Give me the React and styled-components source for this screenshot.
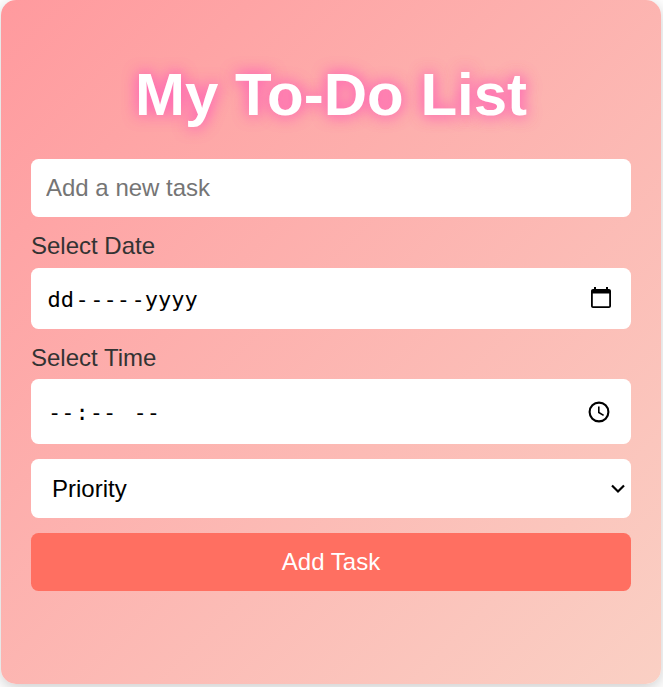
import React from 'react';
import styled, { createGlobalStyle } from 'styled-components';

const GlobalStyle = createGlobalStyle`
  *, *::before, *::after { box-sizing: border-box; }
  body {
    margin: 0;
    background: #fff;
    overflow: hidden;
    font-family: "Liberation Sans", Arial, sans-serif;
  }
`;

const Page = styled.main`
  height: 687px;
  padding: 0 2px 3px 1px;
`;

const Card = styled.section`
  width: 660px;
  height: 684px;
  padding: 60px 30px 0;
  border-radius: 15px;
  background: linear-gradient(135deg, #ff9a9e, #fad0c4);
  box-shadow: 0 4px 15px rgba(0, 0, 0, 0.2);
`;

const Title = styled.h1`
  margin: 0 0 30px;
  font-size: 60px;
  line-height: 69px;
  font-weight: 700;
  text-align: center;
  color: #fff;
  text-shadow: 0 0 15px #ff69b4, 0 0 15px rgba(255, 105, 180, 0.9);
`;

const Form = styled.form`
  display: flex;
  flex-direction: column;
`;

const TaskInput = styled.input`
  width: 100%;
  height: 58px;
  padding: 0 15px;
  border: 0;
  border-radius: 7.5px;
  background: #fff;
  font: 24px "Liberation Sans", Arial, sans-serif;
  &::placeholder { color: #757575; opacity: 1; }
`;

const Label = styled.label`
  height: ${(p) => p.$height}px;
  padding-top: 15px;
  font-size: 24px;
  line-height: 28px;
  color: #333;
`;

const Field = styled.div`
  display: flex;
  align-items: center;
  justify-content: space-between;
  height: ${(p) => p.$height}px;
  margin-bottom: ${(p) => p.$after || 0}px;
  padding: 0 ${(p) => p.$right}px 0 ${(p) => p.$left}px;
  border-radius: 7.5px;
  background: #fff;
  color: #000;
  font-size: 24px;
  line-height: 28px;
`;

const Parts = styled.div`
  display: flex;
  padding-top: ${(p) => p.$drop}px;
  font: 22px/28px "DejaVu Sans Mono", monospace;
  white-space: pre;
`;

const Part = styled.span`
  margin-right: ${(p) => p.$gap || 0}px;
`;

const Icon = styled.svg`
  display: block;
  flex: none;
  margin-bottom: ${(p) => p.$lift || 0}px;
`;

const AddButton = styled.button`
  height: 58px;
  padding: 0;
  border: 0;
  border-radius: 7.5px;
  background: #ff6f61;
  color: #fff;
  font: 24px "Liberation Sans", Arial, sans-serif;
`;

const CalendarIcon = () => (
  <Icon width="24" height="24" viewBox="0 0 24 24" $lift={2}>
    <path d="M20 3h-1V1h-2v2H7V1H5v2H4c-1.1 0-2 .9-2 2v15c0 1.1.9 2 2 2h16c1.1 0 2-.9 2-2V5c0-1.1-.9-2-2-2zm.2 17.3H3.8V7.5h16.4z" />
  </Icon>
);

const ClockIcon = () => (
  <Icon width="22" height="22" viewBox="0 0 22 22" fill="none" stroke="#000">
    <circle cx="11" cy="11" r="9.4" strokeWidth="2.1" />
    <path d="M10.8 5.5v6l4.8 2.9" strokeWidth="1.6" />
  </Icon>
);

const ChevronIcon = () => (
  <Icon width="14" height="10" viewBox="0 0 14 10" fill="none" stroke="#000">
    <path d="M1 1.5l6 6 6-6" strokeWidth="2.2" />
  </Icon>
);

export default function App() {
  return (
    <>
      <GlobalStyle />
      <Page>
        <Card>
          <Title>My To-Do List</Title>
          <Form>
            <TaskInput placeholder="Add a new task" />
            <Label $height={51}>Select Date</Label>
            <Field $height={61} $left={16.5} $right={18}>
              <Parts $drop={2}>
                <Part $gap={1.5}>dd</Part>
                <Part $gap={1.5}>-</Part>
                <Part $gap={1.5}>---</Part>
                <Part>-</Part>
                <Part>yyyy</Part>
              </Parts>
              <CalendarIcon />
            </Field>
            <Label $height={50}>Select Time</Label>
            <Field $height={65} $after={15} $left={17} $right={21}>
              <Parts $drop={2}>
                <Part $gap={1}>--</Part>
                <Part $gap={1}>:</Part>
                <Part $gap={4}>-- </Part>
                <Part>--</Part>
              </Parts>
              <ClockIcon />
            </Field>
            <Field $height={59} $after={15} $left={21} $right={6}>
              Priority
              <ChevronIcon />
            </Field>
            <AddButton type="button">Add Task</AddButton>
          </Form>
        </Card>
      </Page>
    </>
  );
}
